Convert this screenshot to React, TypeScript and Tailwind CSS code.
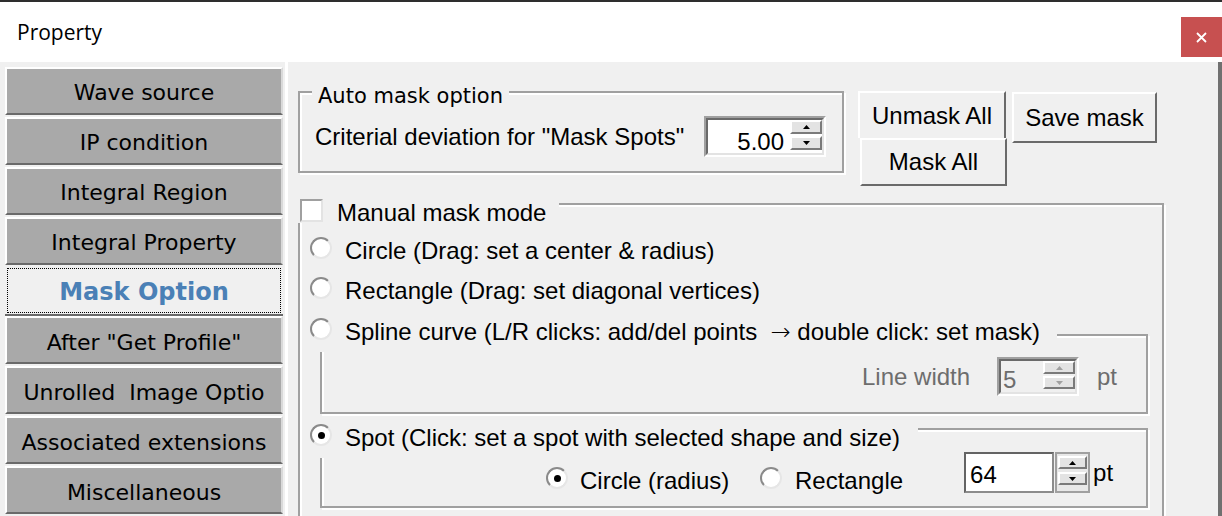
import type { ReactNode } from "react";

const navItems = [
  "Wave source",
  "IP condition",
  "Integral Region",
  "Integral Property",
  "Mask Option",
  'After "Get Profile"',
  "Unrolled  Image Optio",
  "Associated extensions",
  "Miscellaneous",
];

function NavButton({ label, active }: { label: string; active?: boolean }) {
  if (active) {
    return (
      <div className="-mt-[2px] ml-[5px] h-[52px] w-[278px] border-b-2 border-[#6a6a6a] bg-[#f0f0f0] px-[2px] pb-[1px] pt-[3px]">
        <div className="flex h-full items-center justify-center border border-dotted border-black pt-[3px] font-['DejaVu_Sans',sans-serif] text-[24px] font-bold leading-none text-[#4a80b6]">
          {label}
        </div>
      </div>
    );
  }
  return (
    <div className="mb-[2px] ml-[5px] flex h-[48px] w-[278px] items-center justify-center border-2 border-t-white border-l-white border-b-[#6a6a6a] border-r-[#d9d9d9] bg-[#a9a9a9] pt-[5px] font-['DejaVu_Sans',sans-serif] text-[22px] leading-none whitespace-pre text-black">
      {label}
    </div>
  );
}

function Etched({
  className = "",
  legend,
  legendClass = "",
  children,
}: {
  className?: string;
  legend?: ReactNode;
  legendClass?: string;
  children?: ReactNode;
}) {
  return (
    <div
      className={`relative shrink-0 border-2 border-[#a0a0a0] shadow-[inset_2px_2px_0_#ffffff,2px_2px_0_#ffffff] ${className}`}
    >
      {legend && (
        <div className={`absolute flex items-start bg-[#f0f0f0] ${legendClass}`}>
          {legend}
        </div>
      )}
      {children}
    </div>
  );
}

function Radio({ checked }: { checked?: boolean }) {
  return (
    <span className="flex h-[22px] w-[22px] shrink-0 items-center justify-center rounded-full border-2 border-t-[#8a8a8a] border-l-[#8a8a8a] border-r-[#e6e6e6] border-b-[#e6e6e6] bg-white">
      {checked && <span className="h-[7px] w-[7px] rounded-full bg-black" />}
    </span>
  );
}

function Arrow({ up, color = "#000" }: { up?: boolean; color?: string }) {
  return (
    <svg width="7" height="4" viewBox="0 0 7 4">
      <path d={up ? "M3.5 0L7 4H0Z" : "M0 0H7L3.5 4Z"} fill={color} />
    </svg>
  );
}

function SpinBtn({ up, disabled, h }: { up?: boolean; disabled?: boolean; h: string }) {
  return (
    <div
      className={`flex ${h} items-center justify-center border-2 border-t-white border-l-white border-r-[#7a7a7a] border-b-[#7a7a7a] bg-[#e3e3e3]`}
    >
      <Arrow up={up} color={disabled ? "#a0a0a0" : "#000"} />
    </div>
  );
}

function Choice({ label, checked }: { label: ReactNode; checked?: boolean }) {
  return (
    <div className="flex items-start gap-[13px]">
      <Radio checked={checked} />
      <span className="whitespace-pre">{label}</span>
    </div>
  );
}

export default function App() {
  return (
    <div className="flex h-[516px] w-[1222px] flex-col overflow-hidden bg-[#f0f0f0] font-['Liberation_Sans',Arial,sans-serif] text-[24px] leading-[28px] text-black">
      {/* title bar */}
      <div className="flex h-[62px] shrink-0 items-start border-t-2 border-[#2e2e2e] bg-white">
        <span className="ml-[17px] self-center font-['Open_Sans',sans-serif] text-[21px] leading-none">
          Property
        </span>
        <div className="ml-auto mt-[15px] flex h-[40px] w-[41px] items-center justify-center bg-[#c75050]">
          <svg width="11" height="11" viewBox="0 0 11 11">
            <path d="M1 1L10 10M10 1L1 10" stroke="#fff" strokeWidth="1.8" />
          </svg>
        </div>
      </div>

      <div className="flex min-h-0 flex-1">
        {/* page list */}
        <div className="flex w-[285px] shrink-0 flex-col pt-[5px]">
          {navItems.map((item) => (
            <NavButton key={item} label={item} active={item === "Mask Option"} />
          ))}
        </div>

        {/* page */}
        <div className="flex min-w-0 flex-1 flex-col border-l-[3px] border-r-4 border-l-white border-r-[#707070] pl-[10px]">
          <div className="mt-[29px] flex items-start">
            <Etched
              className="h-[82px] w-[546px]"
              legendClass="left-[12px] -top-[9px] px-[6px]"
              legend={
                <span className="font-['DejaVu_Sans',sans-serif] text-[21px] leading-[24px]">
                  Auto mask option
                </span>
              }
            >
              <div className="flex items-center pl-[15px] pt-[23px]">
                <span className="w-[389px] shrink-0 whitespace-pre">Criterial deviation for "Mask Spots"</span>
                <div className="flex h-[41px] w-[122px] border-2 border-t-[#a0a0a0] border-l-[#a0a0a0] border-r-white border-b-white">
                  <div className="flex flex-1 border-2 border-t-[#6a6a6a] border-l-[#6a6a6a] border-r-[#e3e3e3] border-b-[#e3e3e3] bg-white">
                    <div className="flex-1 pr-[6px] pt-[8px] text-right">5.00</div>
                    <div className="flex w-[32px] flex-col gap-[2px]">
                      <SpinBtn up h="h-[14px]" />
                      <SpinBtn h="h-[14px]" />
                    </div>
                  </div>
                </div>
              </div>
            </Etched>

            <div className="ml-[14px] flex flex-col">
              <div className="flex h-[47px] w-[148px] items-center justify-center border-2 border-b-0 border-t-white border-l-white border-r-[#6a6a6a]">
                Unmask All
              </div>
              <div className="ml-[2px] flex h-[48px] w-[147px] items-center justify-center border-2 border-t-white border-l-white border-r-[#6a6a6a] border-b-[#6a6a6a]">
                Mask All
              </div>
            </div>

            <div className="ml-[5px] mt-[1px] flex h-[51px] w-[145px] items-center justify-center border-2 border-t-white border-l-white border-r-[#6a6a6a] border-b-[#6a6a6a]">
              Save mask
            </div>
          </div>

          <Etched
            className="mt-[17px] h-[330px] w-[866px]"
            legendClass="-left-[2px] -top-[6px] h-[24px] pl-[2px] pr-[13px]"
            legend={
              <>
                <span className="h-[23px] w-[23px] shrink-0 border-2 border-t-[#a0a0a0] border-l-[#a0a0a0] border-r-[#e3e3e3] border-b-[#e3e3e3] bg-white" />
                <span className="ml-[14px] whitespace-pre">Manual mask mode</span>
              </>
            }
          >
            <div className="flex flex-col pl-[10px] pt-[32px]">
              <Choice label="Circle (Drag: set a center & radius)" />
              <div className="mt-[12px]">
                <Choice label="Rectangle (Drag: set diagonal vertices)" />
              </div>

              <Etched
                className="ml-[10px] mt-[29px] h-[80px] w-[828px]"
                legendClass="-left-[14px] -top-[18px] h-[34px] pl-[2px] pr-[17px]"
                legend={
                  <Choice
                    label={
                      <>
                        {"Spline curve (L/R clicks: add/del points  "}
                        <span className="font-['DejaVu_Sans',sans-serif] font-light">→</span>
                        {" double click: set mask)"}
                      </>
                    }
                  />
                }
              >
                <div className="flex items-center pl-[540px] pt-[21px]">
                  <span className="w-[135px] shrink-0 text-[#6d6d6d]">Line width</span>
                  <div className="flex h-[39px] w-[82px] border-2 border-t-[#a0a0a0] border-l-[#a0a0a0] border-r-white border-b-white">
                    <div className="flex flex-1 border-2 border-t-[#6a6a6a] border-l-[#6a6a6a] border-r-[#e3e3e3] border-b-[#e3e3e3] bg-[#f0f0f0]">
                      <div className="flex-1 pl-[2px] pt-[5px] text-[#6d6d6d]">5</div>
                      <div className="flex w-[32px] flex-col gap-[2px]">
                        <SpinBtn up disabled h="h-[13px]" />
                        <SpinBtn disabled h="h-[13px]" />
                      </div>
                    </div>
                  </div>
                  <span className="ml-[18px] text-[#6d6d6d]">pt</span>
                </div>
              </Etched>

              <Etched
                className="ml-[10px] mt-[14px] h-[80px] w-[828px]"
                legendClass="-left-[14px] -top-[6px] h-[34px] pl-[2px] pr-[18px]"
                legend={<Choice checked label="Spot (Click: set a spot with selected shape and size)" />}
              >
                <div className="flex items-start pl-[224px] pt-[22px]">
                  <div className="mt-[15px] flex items-start gap-[12px]">
                    <Radio checked />
                    <span className="w-[153px] whitespace-pre">Circle (radius)</span>
                  </div>
                  <div className="ml-[27px] mt-[15px]">
                    <Choice label="Rectangle" />
                  </div>
                  <div className="ml-[61px] h-[41px] w-[90px] border-2 border-t-[#646464] border-l-[#646464] border-r-[#8c8c8c] border-b-[#8c8c8c] bg-white pl-[4px] pt-[7px]">
                    64
                  </div>
                  <div className="ml-[1px] flex h-[41px] w-[35px] flex-col gap-[3px] border-2 border-[#a0a0a0] bg-[#e8e8e8] px-[1px] pt-[2px]">
                    <SpinBtn up h="h-[13px]" />
                    <SpinBtn h="h-[13px]" />
                  </div>
                  <span className="ml-[3px] mt-[7px]">pt</span>
                </div>
              </Etched>
            </div>
          </Etched>
        </div>
      </div>
    </div>
  );
}
